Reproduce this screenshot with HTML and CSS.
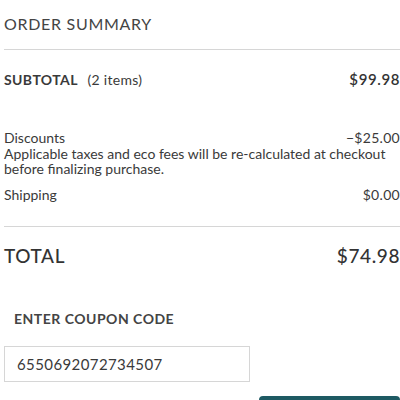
FILE: index.html
```html
<!DOCTYPE html>
<html>
<head>
<meta charset="utf-8">
<link rel="stylesheet" href="styles.css">
</head>
<body>
<div class="summary">
  <h2 class="title">ORDER SUMMARY</h2>
  <div class="row subtotal">
    <span><b>SUBTOTAL</b> <span class="items">(2 items)</span></span>
    <span class="amount">$99.98</span>
  </div>
  <div class="details">
    <div class="row small">
      <span>Discounts</span>
      <span>−$25.00</span>
    </div>
    <p class="note">Applicable taxes and eco fees will be re-calculated at checkout before finalizing purchase.</p>
    <div class="row small ship">
      <span>Shipping</span>
      <span>$0.00</span>
    </div>
  </div>
  <div class="row total">
    <span>TOTAL</span>
    <span>$74.98</span>
  </div>
  <div class="coupon">
    <div class="coupon-label">ENTER COUPON CODE</div>
    <div class="coupon-row">
      <input class="coupon-input" type="text" value="6550692072734507">
      <button class="apply"></button>
    </div>
  </div>
</div>
</body>
</html>
```

FILE: styles.css
```css
html, body {
  margin: 0;
  padding: 0;
  background: #fff;
  overflow: hidden;
}
body {
  font-family: Lato, "Open Sans", sans-serif;
  color: #3a3a3a;
}
.summary {
  padding: 0 0 0 4px;
  width: 396px;
}
.title {
  margin: 0;
  padding-top: 14px;
  height: 50px;
  box-sizing: border-box;
  font-size: 16px;
  font-weight: 400;
  letter-spacing: 0.7px;
  line-height: 20px;
  color: #444;
  border-bottom: 1px solid #d6d6d6;
}
.row {
  display: flex;
  justify-content: space-between;
  align-items: baseline;
}
.subtotal {
  margin-top: 20px;
  font-size: 14px;
  line-height: 18px;
}
.subtotal b {
  font-weight: 700;
  letter-spacing: 0.4px;
}
.items {
  margin-left: 6px;
  font-size: 14px;
  letter-spacing: 0.3px;
}
.subtotal .amount {
  font-size: 15px;
  font-weight: 600;
  letter-spacing: 0.6px;
  color: #333;
}
.details {
  margin-top: 41px;
  padding-bottom: 23px;
  border-bottom: 1px solid #d6d6d6;
}
.small {
  font-size: 14px;
  line-height: 16px;
}
.small span:last-child {
  letter-spacing: 0.3px;
}
.note {
  margin: 0;
  font-size: 14px;
  line-height: 15px;
}
.ship {
  margin-top: 11px;
}
.total {
  margin-top: 17px;
  font-size: 19px;
  font-weight: 500;
  line-height: 24px;
  letter-spacing: 0.6px;
  color: #333;
}
.coupon {
  margin-top: 42px;
}
.coupon-label {
  padding-left: 10px;
  font-size: 14px;
  font-weight: 700;
  letter-spacing: 0.5px;
  line-height: 18px;
  color: #444;
}
.coupon-row {
  margin-top: 18px;
  display: flex;
  gap: 9px;
}
.coupon-input {
  width: 246px;
  height: 36px;
  box-sizing: border-box;
  border: 1px solid #d6d6d6;
  padding: 0 12px;
  font-family: Lato, "Open Sans", sans-serif;
  font-size: 15px;
  color: #3a3a3a;
  letter-spacing: 0.4px;
  outline: none;
}
.apply {
  flex: 1;
  height: 40px;
  margin-top: 50px;
  border: none;
  border-radius: 4px;
  background: #1e5a63;
}
```
